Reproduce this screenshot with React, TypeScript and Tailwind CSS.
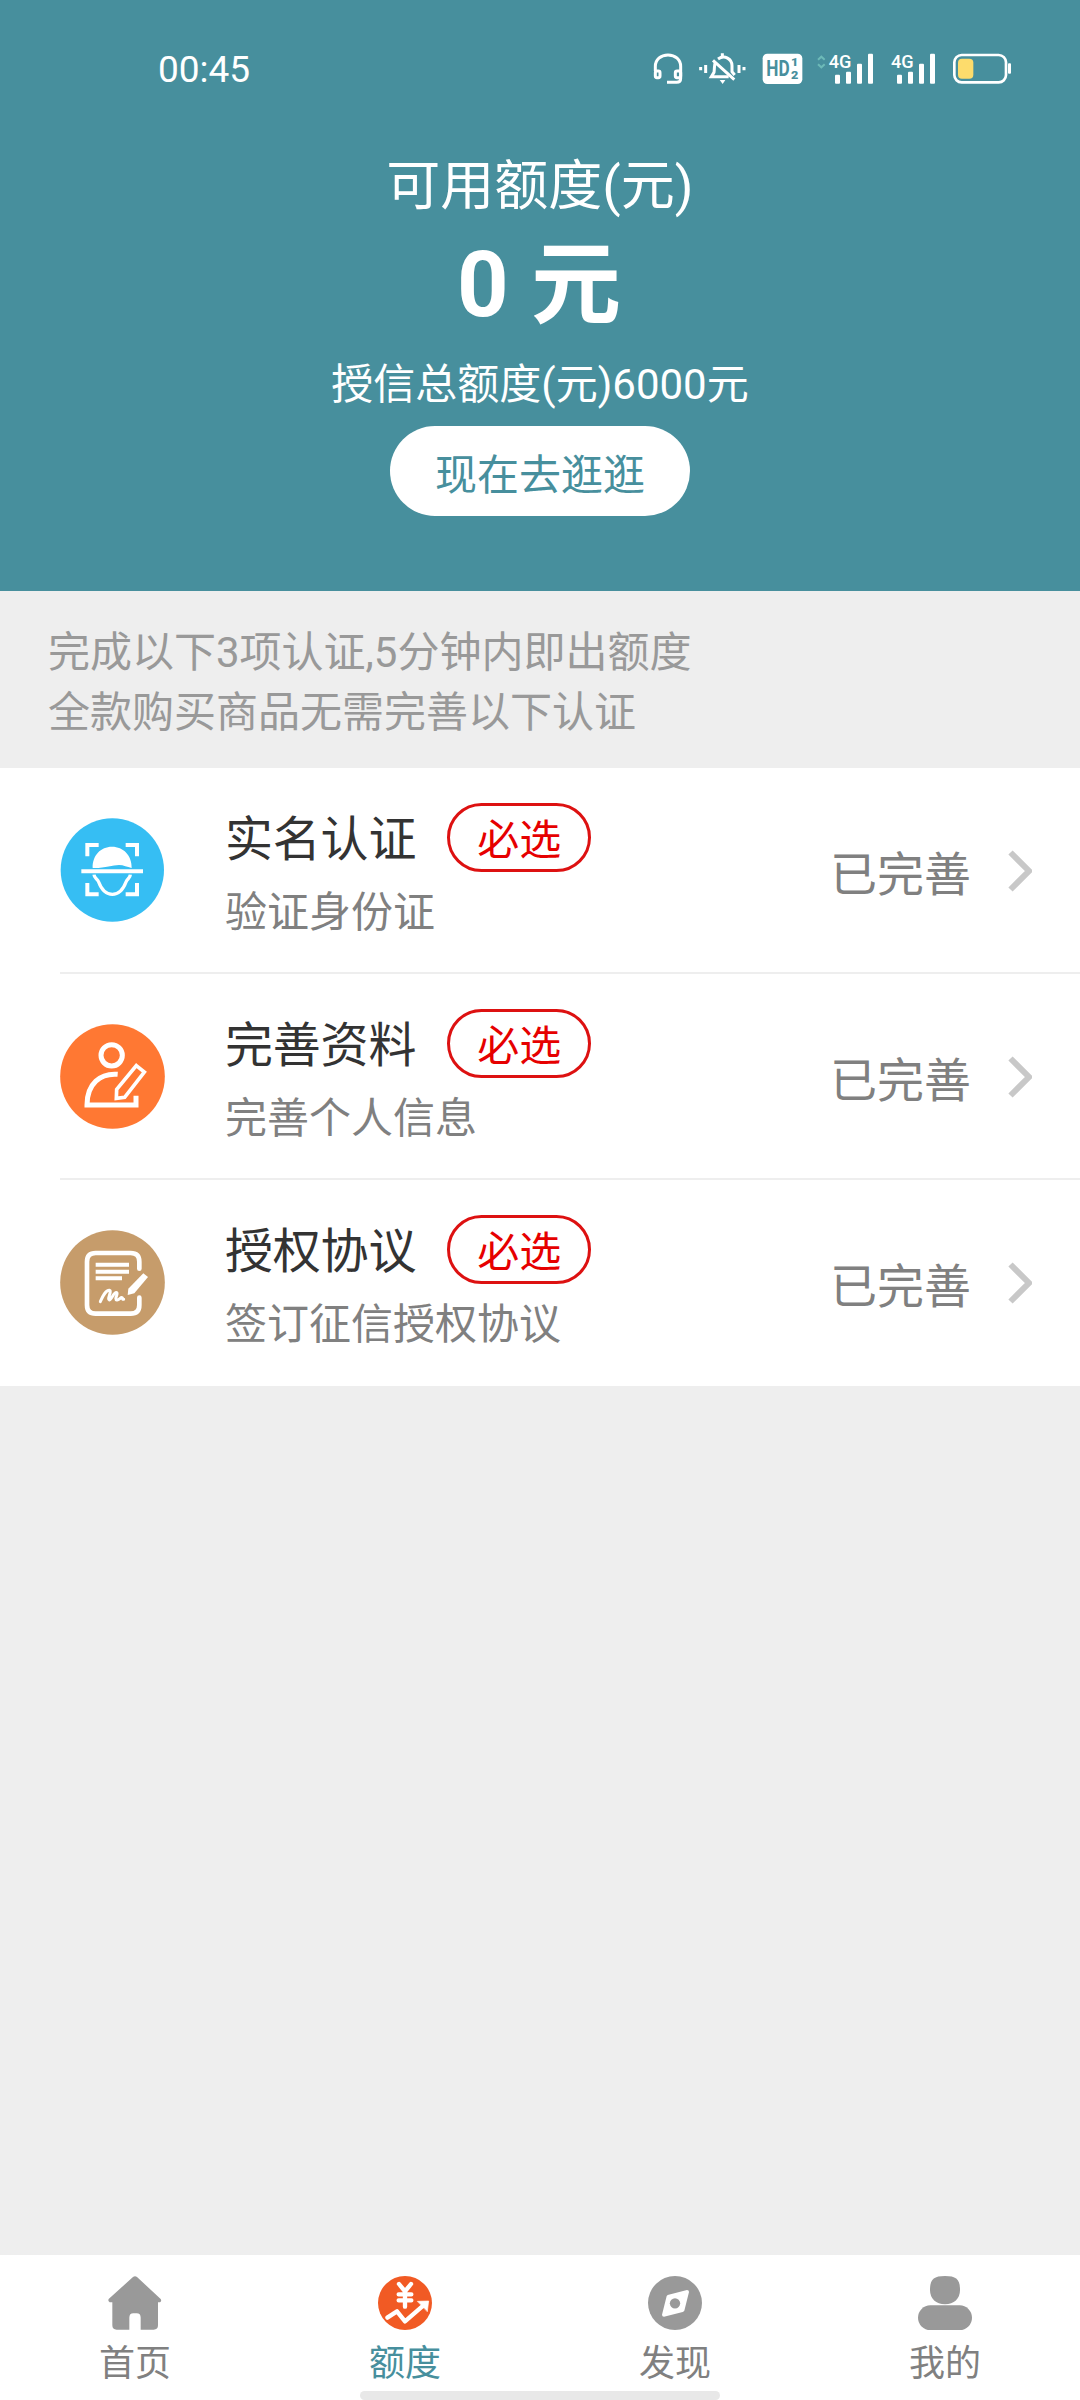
import type { ReactNode } from "react";

interface AuthItem {
  title: string;
  desc: string;
  icon: ReactNode;
}

function StatusBar() {
  return (
    <div className="flex h-[138px] w-full items-center pl-[158px] pr-[68px]">
      <span className="flex-1 text-[37px] leading-none">00:45</span>

      {/* headphones */}
      <svg className="h-8 w-[30px]" viewBox="99 70 90 96" fill="none" stroke="#fff" strokeWidth="9">
        <path d="M106 124v-14c0-20 16-34 38-34s38 14 38 34v36c0 8-4 12-12 12h-29" />
        <rect x="106" y="124" width="14" height="20" rx="5" />
        <rect x="166" y="124" width="16" height="20" rx="5" />
      </svg>

      {/* vibrate / muted bell */}
      <svg className="ml-4 h-8 w-[47px]" viewBox="237 70 141 96" fill="none" stroke="#fff" strokeWidth="9">
        <path d="M242 112v10M257 106v24M357 106v24M372 112v10" />
        <path d="M294 88c20-14 42 0 42 20v18l8 10M286 98c-4 8-2 20-4 30l-8 13h52" />
        <path d="M279 92l64 58M307 71v12" />
        <path d="M299 151h17l-8 12z" fill="#fff" stroke="none" />
      </svg>

      {/* HD voice */}
      <svg className="ml-4 h-8 w-[41px]" viewBox="426 70 123 96">
        <rect x="428" y="72" width="119" height="91" rx="14" fill="#fff" />
        <text x="439" y="140" fontSize="64" fontWeight="700" textLength="70" lengthAdjust="spacingAndGlyphs" fill="#478f9d">HD</text>
        <text x="513" y="110" fontSize="31" fontWeight="900" textLength="22" lengthAdjust="spacingAndGlyphs" fill="#478f9d">1</text>
        <text x="513" y="147" fontSize="31" fontWeight="900" textLength="22" lengthAdjust="spacingAndGlyphs" fill="#478f9d">2</text>
      </svg>

      <svg className="ml-[13px] h-8 w-[58px] overflow-visible" viewBox="588 70 174 96" fill="#fff">
        <path d="M594 90l10-9 10 9M594 104l10 9 10-9" fill="none" stroke="#6dbab8" strokeWidth="6" />
        <text x="626" y="115" fontSize="56" fontWeight="500" textLength="68" lengthAdjust="spacingAndGlyphs">4G</text>
        <rect x="645" y="135" width="15" height="27" rx="3" />
        <rect x="678" y="126" width="15" height="36" rx="3" />
        <rect x="711" y="102" width="15" height="60" rx="3" />
        <rect x="744" y="72" width="15" height="90" rx="3" />
      </svg>

      <svg className="ml-4 h-8 w-[46px] overflow-visible" viewBox="810 70 138 96" fill="#fff">
        <text x="813" y="115" fontSize="56" fontWeight="500" textLength="68" lengthAdjust="spacingAndGlyphs">4G</text>
        <rect x="831" y="135" width="15" height="27" rx="3" />
        <rect x="864" y="126" width="15" height="36" rx="3" />
        <rect x="897" y="102" width="15" height="60" rx="3" />
        <rect x="930" y="72" width="15" height="90" rx="3" />
      </svg>

      {/* battery */}
      <svg className="ml-4 h-8 w-[60px]" viewBox="996 70 180 96">
        <rect x="1003" y="76" width="155" height="82" rx="22" fill="none" stroke="#fff" strokeWidth="8" />
        <rect x="1014" y="87" width="46" height="60" rx="12" fill="#fddc6c" />
        <rect x="1164" y="101" width="9" height="31" rx="3" fill="#fff" />
      </svg>
    </div>
  );
}

function FaceIcon() {
  return (
    <svg className="h-[105px] w-[105px]" viewBox="31 27 315 315" fill="none">
      <circle cx="188" cy="183" r="155" fill="#36bef3" />
      <path d="M113 142v-34h34M228 108h34v34M113 222v34h34M228 256h34v-34" stroke="#fff" strokeWidth="12" />
      <path d="M129 177c-1-38 24-64 58-64s60 26 59 64c-14-3-24-9-38-9-20 0-42 10-79 9z" fill="#fff" />
      <path d="M95 187h185" stroke="#fff" strokeWidth="12" />
      <path d="M133 197c1 12 10 11 14 22 9 24 22 37 41 37s32-13 41-37c4-11 12-10 13-22" stroke="#fff" strokeWidth="10" />
    </svg>
  );
}

function ProfileIcon() {
  return (
    <svg className="h-[105px] w-[105px]" viewBox="30 643 315 315" fill="none">
      <circle cx="187.500" cy="800.500" r="157" fill="#ff7833" />
      <circle cx="185" cy="737" r="32" stroke="#fff" strokeWidth="15" />
      <path d="M203 794c-52-4-92 28-92 92h147v-28" stroke="#fff" strokeWidth="15" />
      <path d="M259 768l24 19-59 76-25 3 1-27z" stroke="#fff" strokeWidth="11" />
    </svg>
  );
}

function AgreementIcon() {
  return (
    <svg className="h-[105px] w-[105px]" viewBox="30 30 315 315" fill="none">
      <circle cx="187.500" cy="187.500" r="157" fill="#c69c6b" />
      <path d="M268 146v-21c0-17-9-26-26-26H137c-17 0-26 9-26 26v130c0 17 9 26 26 26h105c17 0 26-9 26-26v-22" stroke="#fff" strokeWidth="14" strokeLinecap="round" />
      <path d="M137 134h100M137 155h100M137 175h79" stroke="#fff" strokeWidth="12" />
      <path d="M151 245c7-15 15-34 27-34 9 2-8 27 0 29 6 0 14-26 22-22 6 3-9 20 1 22 6 1 11-9 15-7 4 1-1 6 5 5" stroke="#fff" strokeWidth="9" strokeLinecap="round" strokeLinejoin="round" />
      <path d="M280 160l14 11-41 49-20 5 2-19z" fill="#fff" />
    </svg>
  );
}

const items: AuthItem[] = [
  { title: "实名认证", desc: "验证身份证", icon: <FaceIcon /> },
  { title: "完善资料", desc: "完善个人信息", icon: <ProfileIcon /> },
  { title: "授权协议", desc: "签订征信授权协议", icon: <AgreementIcon /> },
];

function AuthRow({ item, last }: { item: AuthItem; last: boolean }) {
  return (
    <div className={`ml-[60px] flex h-[206px] items-center pr-12 ${last ? "pb-0.5" : "border-b-2 border-[#eeeeee]"}`}>
      <div className="mt-px">{item.icon}</div>
      <div className="ml-[60px] mt-[35px] flex-1 self-start">
        <div className="flex h-[69px] items-center">
          <h3 className="mt-1 text-[48px] leading-[60px] tracking-[-0.2px] text-[#333333]">{item.title}</h3>
          <span className="ml-[31px] flex h-[69px] w-36 justify-center rounded-full border-3 border-[#dd1111] pt-[5px] text-[42px] leading-[60px] text-[#e60000]">
            必选
          </span>
        </div>
        <p className="mt-[11px] text-[42px] leading-[60px] text-[#808080]">{item.desc}</p>
      </div>
      <span className="mt-[9px] text-[47px] leading-[60px] text-[#808080]">已完善</span>
      <svg className="ml-[37px] mt-0.5 h-[42px] w-6" viewBox="0 0 24 42" fill="none" stroke="#c8c8c8" strokeWidth="6">
        <path d="M2.500 2.500L21 21 2.500 39.500" />
      </svg>
    </div>
  );
}

const tabs = [
  {
    label: "首页",
    icon: (
      <path
        d="M75 3q6-5 12 0l71 66q4 6-2 10h-6v69q0 13-13 13H98v-36q0-13-12-13H76q-12 0-12 13v36H26q-13 0-13-13V79H5q-6-4-3-10z"
        fill="#999"
      />
    ),
  },
  {
    label: "额度",
    active: true,
    icon: (
      <g fill="none" stroke="#fff" strokeWidth="13" strokeLinecap="round" strokeLinejoin="round">
        <circle cx="81" cy="81" r="81" fill="#f15a24" stroke="none" />
        <path d="M63 24l18 22 18-22M81 48v44M62 55h38M62 73h38" />
        <path d="M28 125l29-19 24 30 58-50" />
        <path d="M119 76l33-1-4 31z" fill="#fff" strokeWidth="2" />
      </g>
    ),
  },
  {
    label: "发现",
    icon: (
      <g fill="#999">
        <circle cx="81" cy="81" r="81" />
        <path d="M59 57l58-15q6 0 6 6l-14 56q-2 3-5 4l-56 14q-6 0-6-6l14-56z" fill="#fff" />
        <circle cx="81" cy="82" r="15.500" />
      </g>
    ),
  },
  {
    label: "我的",
    icon: (
      <g fill="#999">
        <path d="M81 0c34 0 45 10 45 42 0 26-18 43-45 43S36 68 36 42C36 10 47 0 81 0z" />
        <rect x="0" y="88" width="162" height="74" rx="37" />
      </g>
    ),
  },
];

export default function App() {
  return (
    <div className="flex h-[2400px] w-[1080px] flex-col bg-[#eeeeee] font-[Roboto,'Noto_Sans_CJK_SC',sans-serif]">
      <header className="flex h-[591px] flex-col items-center bg-[#478f9d] text-white">
        <StatusBar />
        <p className="mt-[13px] text-[54px] leading-[72px]">可用额度(元)</p>
        <p className="mt-[13px] mr-0.5 text-[90px] leading-[100px] font-bold">0 元</p>
        <p className="mt-[19px] text-[42px] leading-[60px]">授信总额度(元)6000元</p>
        <button className="mt-[11px] h-[90px] w-[300px] rounded-full bg-white pt-[10px] text-[42px] leading-[80px] text-[#478f9d]">
          现在去逛逛
        </button>
      </header>

      <div className="h-[177px] px-12 pt-8 text-[42px] leading-[60px] text-[#999999]">
        <p>完成以下3项认证,5分钟内即出额度</p>
        <p>全款购买商品无需完善以下认证</p>
      </div>

      <section className="bg-white">
        {items.map((item, index) => (
          <AuthRow key={item.title} item={item} last={index === items.length - 1} />
        ))}
      </section>

      <nav className="relative mt-auto grid h-[145px] grid-cols-4 bg-white">
        {tabs.map((tab) => (
          <div key={tab.label} className="flex flex-col items-center pt-[21px]">
            <svg className="h-[54px] w-[54px]" viewBox="0 0 162 162">
              {tab.icon}
            </svg>
            <span className={`mt-[10px] text-[36px] leading-[48px] ${tab.active ? "text-[#478f9d]" : "text-[#808080]"}`}>
              {tab.label}
            </span>
          </div>
        ))}
        {/* gesture bar */}
        <div className="absolute bottom-0 left-[360px] h-[9px] w-[360px] rounded-full bg-[#e8e8e8]" />
      </nav>
    </div>
  );
}
